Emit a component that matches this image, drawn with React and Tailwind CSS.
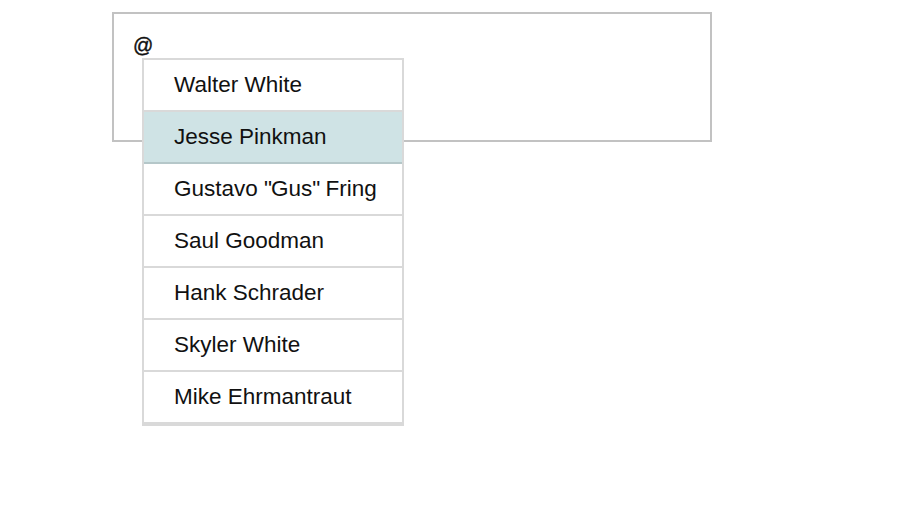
import React from "react";

const names = [
  "Walter White",
  "Jesse Pinkman",
  'Gustavo "Gus" Fring',
  "Saul Goodman",
  "Hank Schrader",
  "Skyler White",
  "Mike Ehrmantraut",
];

export default function App() {
  return (
    <div className="w-[914px] h-[510px] bg-white" style={{ fontFamily: '"Liberation Sans", Arial, sans-serif' }}>
      <div className="pt-[12px] pl-[112px]">
        <div className="relative w-[600px] h-[130px] border-2 border-[#c2c2c2] bg-white">
          <div className="pl-[19px] pt-[19px] text-[20px] leading-[24px] text-[#111] [-webkit-text-stroke:0.4px_#111]">@</div>
          <ul className="absolute left-[28px] top-[44px] w-[262px] bg-white border-2 border-[#d9d9d9]">
            {names.map((n, i) => (
              <li
                key={n}
                className={
                  i === 1
                    ? "h-[52px] flex items-center pl-[30px] pb-[1px] text-[22.5px] text-[#111] bg-[#cfe3e5] border-b-2 border-[#b5c7c9]"
                    : "h-[52px] flex items-center pl-[30px] pb-[1px] text-[22.5px] text-[#111] border-b-2 border-[#d9d9d9]"
                }
              >
                {i === 2 ? (
                  <span>
                    Gustavo <span className="tracking-[-1px]">"</span>Gus<span className="tracking-[-1px]">"</span> Fring
                  </span>
                ) : (
                  n
                )}
              </li>
            ))}
          </ul>
        </div>
      </div>
    </div>
  );
}
